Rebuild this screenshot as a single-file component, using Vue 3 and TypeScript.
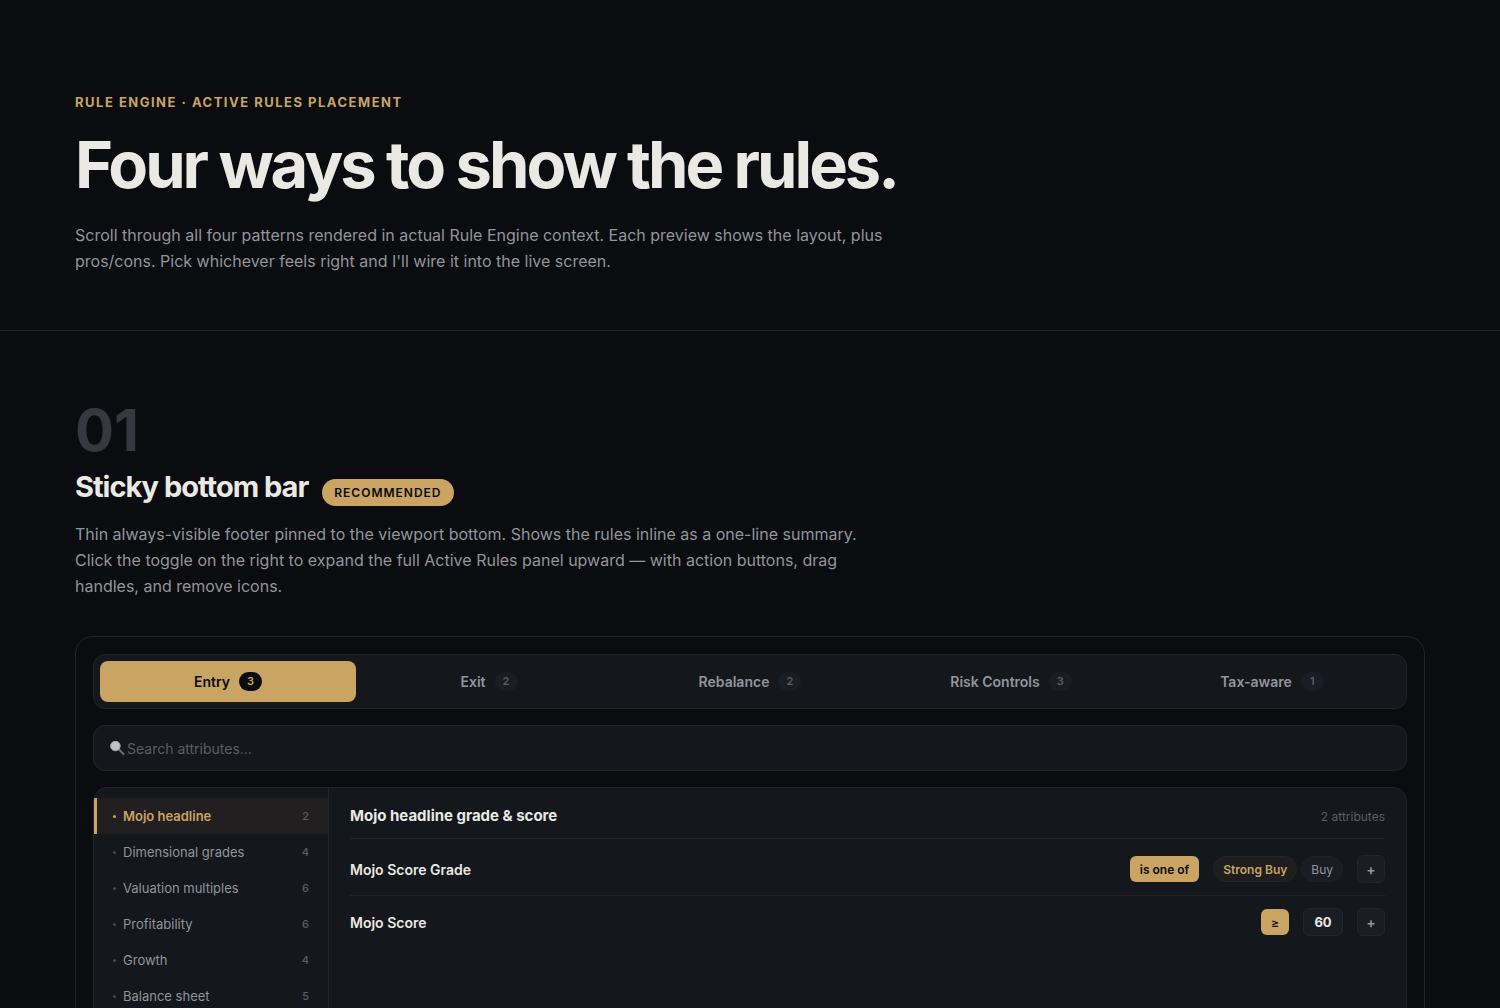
<script setup lang="ts">
import { ref } from 'vue'

interface Tab {
  label: string
  count: number
}

interface Category {
  label: string
  count: number
}

const tabs: Tab[] = [
  { label: 'Entry', count: 3 },
  { label: 'Exit', count: 2 },
  { label: 'Rebalance', count: 2 },
  { label: 'Risk Controls', count: 3 },
  { label: 'Tax-aware', count: 1 },
]

const categories: Category[] = [
  { label: 'Mojo headline', count: 2 },
  { label: 'Dimensional grades', count: 4 },
  { label: 'Valuation multiples', count: 6 },
  { label: 'Profitability', count: 6 },
  { label: 'Growth', count: 4 },
  { label: 'Balance sheet', count: 5 },
]

const grades = ['Strong Buy', 'Buy']

const activeTab = ref('Entry')
const activeCategory = ref('Mojo headline')
const activeGrade = ref('Strong Buy')
const query = ref('')
const minScore = ref('60')
</script>

<template>
  <div class="page">
    <header class="hero">
      <p class="eyebrow">Rule Engine · Active Rules Placement</p>
      <h1>Four ways to show the rules.</h1>
      <p class="lead">
        Scroll through all four patterns rendered in actual Rule Engine context. Each preview shows the layout, plus<br />
        pros/cons. Pick whichever feels right and I'll wire it into the live screen.
      </p>
    </header>

    <section class="option">
      <div class="number">01</div>
      <div class="heading">
        <h2>Sticky bottom bar</h2>
        <span class="badge">Recommended</span>
      </div>
      <p class="lead">
        Thin always-visible footer pinned to the viewport bottom. Shows the rules inline as a one-line summary.<br />
        Click the toggle on the right to expand the full Active Rules panel upward — with action buttons, drag<br />
        handles, and remove icons.
      </p>

      <div class="preview">
        <nav class="tabs">
          <button
            v-for="tab in tabs"
            :key="tab.label"
            type="button"
            class="tab"
            :class="{ active: tab.label === activeTab }"
            @click="activeTab = tab.label"
          >
            {{ tab.label }}
            <span class="tab-count">{{ tab.count }}</span>
          </button>
        </nav>

        <label class="search">
          <svg class="search-icon" viewBox="0 0 15 15" aria-hidden="true">
            <path d="M9 8.5 13.5 13" stroke="#6c6f75" stroke-width="2" stroke-linecap="round" />
            <circle cx="5.4" cy="5" r="4.8" fill="#bfc3c8" stroke="#a0a4a9" stroke-width="1" />
          </svg>
          <input v-model="query" type="text" placeholder="Search attributes…" aria-label="Search attributes" />
        </label>

        <div class="panel">
          <aside class="sidebar">
            <button
              v-for="category in categories"
              :key="category.label"
              type="button"
              class="category"
              :class="{ active: category.label === activeCategory }"
              @click="activeCategory = category.label"
            >
              <span class="dot"></span>
              <span class="category-name">{{ category.label }}</span>
              <span class="category-count">{{ category.count }}</span>
            </button>
          </aside>

          <div class="attributes">
            <div class="attributes-head">
              <h3>Mojo headline grade &amp; score</h3>
              <span class="attributes-count">2 attributes</span>
            </div>

            <div class="attribute">
              <span class="attribute-name">Mojo Score Grade</span>
              <button type="button" class="operator">is one of</button>
              <div class="chips">
                <button
                  v-for="grade in grades"
                  :key="grade"
                  type="button"
                  class="chip"
                  :class="{ active: grade === activeGrade }"
                  @click="activeGrade = grade"
                >
                  {{ grade }}
                </button>
              </div>
              <button type="button" class="add" aria-label="Add Mojo Score Grade rule">+</button>
            </div>

            <div class="attribute">
              <span class="attribute-name">Mojo Score</span>
              <button type="button" class="operator">≥</button>
              <input v-model="minScore" class="value" type="text" aria-label="Mojo Score value" />
              <button type="button" class="add" aria-label="Add Mojo Score rule">+</button>
            </div>
          </div>
        </div>
      </div>
    </section>
  </div>
</template>

<style>
body {
  margin: 0;
  background: #0a0c10;
}
</style>

<style scoped>
.page {
  min-height: 100vh;
  background: #0a0c10;
  color: #ebe9e3;
  font-family: Inter, 'Noto Sans', sans-serif;
}

.page *,
.page *::before {
  box-sizing: border-box;
}

h1,
h2,
h3,
p {
  margin: 0;
}

button,
input {
  margin: 0;
  font-family: inherit;
}

button {
  padding: 0;
  border: 0;
  background: none;
  cursor: pointer;
}

.hero {
  padding: 92px 5% 56px;
  border-bottom: 1px solid #212429;
}

.eyebrow {
  color: #c9a462;
  font-size: 13px;
  font-weight: 700;
  line-height: 20px;
  letter-spacing: 1.5px;
  text-transform: uppercase;
}

h1 {
  margin-top: 17px;
  font-size: 65px;
  font-weight: 700;
  line-height: 72px;
  letter-spacing: -3px;
}

.lead {
  color: #92959b;
  font-size: 16px;
  line-height: 26px;
}

.hero .lead {
  margin-top: 21px;
}

.option {
  padding: 70px 5% 80px;
}

.number {
  color: #363940;
  font-size: 58px;
  font-weight: 700;
  line-height: 58px;
}

.heading {
  display: flex;
  align-items: center;
  gap: 14px;
  margin-top: 8px;
}

h2 {
  font-size: 29px;
  font-weight: 700;
  line-height: 40px;
  letter-spacing: -1px;
}

.badge {
  margin-top: 10px;
  padding: 0 12px;
  border-radius: 14px;
  background: #c9a462;
  color: #0a0c10;
  font-size: 12px;
  font-weight: 600;
  line-height: 27px;
  letter-spacing: 1px;
  text-transform: uppercase;
}

.option .lead {
  margin-top: 14px;
}

.preview {
  margin-top: 37px;
  padding: 17px;
  border: 1px solid #212429;
  border-radius: 18px;
}

.tabs {
  display: flex;
  gap: 5px;
  padding: 6px;
  border: 1px solid #212429;
  border-radius: 12px;
  background: #14171c;
}

.tab {
  display: flex;
  flex: 1;
  align-items: center;
  justify-content: center;
  gap: 9px;
  height: 41px;
  border-radius: 8px;
  color: #92959b;
  font-size: 14px;
  font-weight: 600;
}

.tab-count {
  min-width: 23px;
  border-radius: 10px;
  background: #1a1d24;
  color: #5b5e65;
  font-size: 11px;
  font-weight: 600;
  line-height: 19px;
  text-align: center;
}

.tab.active {
  background: #c9a462;
  color: #0a0c10;
}

.tab.active .tab-count {
  background: #0a0c10;
  color: #c9a462;
}

.search {
  display: flex;
  align-items: center;
  gap: 2px;
  height: 46px;
  margin-top: 16px;
  padding: 0 16px;
  border: 1px solid #212429;
  border-radius: 12px;
  background: #14171c;
}

.search-icon {
  width: 15px;
  height: 15px;
  fill: none;
}

.search input {
  flex: 1;
  padding: 0;
  border: 0;
  outline: 0;
  background: none;
  color: #ebe9e3;
  font-size: 14px;
}

.search input::placeholder {
  color: #5b5e65;
  opacity: 1;
}

.panel {
  display: flex;
  margin-top: 16px;
  overflow: hidden;
  border: 1px solid #212429;
  border-radius: 14px;
  background: #14171c;
}

.sidebar {
  flex: none;
  width: 235px;
  padding: 10px 0;
  border-right: 1px solid #212429;
}

.category {
  display: flex;
  align-items: center;
  gap: 7px;
  width: 100%;
  height: 36px;
  padding: 0 19px 0 16px;
  border-left: 3px solid transparent;
  color: #92959b;
  font-size: 13px;
  text-align: left;
}

.dot {
  width: 3px;
  height: 3px;
  border-radius: 50%;
  background: #45484f;
}

.category-name {
  flex: 1;
}

.category-count {
  color: #5b5e65;
  font-size: 11px;
  font-weight: 500;
}

.category.active {
  border-left-color: #c9a462;
  background: #211f20;
  color: #c9a462;
  font-weight: 600;
}

.category.active .dot {
  background: #c9a462;
}

.attributes {
  flex: 1;
  padding: 16px 21px;
}

.attributes-head {
  display: flex;
  align-items: baseline;
  justify-content: space-between;
  padding-bottom: 10px;
  margin-bottom: 4px;
  border-bottom: 1px solid #212429;
}

h3 {
  font-size: 15px;
  font-weight: 700;
  line-height: 24px;
}

.attributes-count {
  color: #5b5e65;
  font-size: 12px;
}

.attribute {
  display: flex;
  align-items: center;
  gap: 14px;
  padding: 12px 0;
}

.attribute + .attribute {
  border-top: 1px solid #212429;
}

.attribute-name {
  flex: 1;
  font-size: 14px;
  font-weight: 600;
}

.operator {
  height: 26px;
  padding: 0 10px;
  border-radius: 6px;
  background: #c9a462;
  color: #0a0c10;
  font-size: 12px;
  font-weight: 600;
}

.chips {
  display: flex;
  gap: 4px;
}

.chip {
  height: 26px;
  padding: 0 9px;
  border: 1px solid #1e2127;
  border-radius: 13px;
  background: #1a1d24;
  color: #92959b;
  font-size: 12px;
}

.chip.active {
  border-color: #26241f;
  background: #1e1e1f;
  color: #c9a462;
  font-weight: 600;
}

.add,
.value {
  height: 28px;
  border: 1px solid #22252b;
  border-radius: 6px;
  background: #1a1d24;
}

.add {
  width: 28px;
  color: #92959b;
  font-size: 14px;
  font-weight: 600;
}

.value {
  width: 40px;
  padding: 0;
  color: #ebe9e3;
  font-size: 13px;
  font-weight: 700;
  text-align: center;
}
</style>
